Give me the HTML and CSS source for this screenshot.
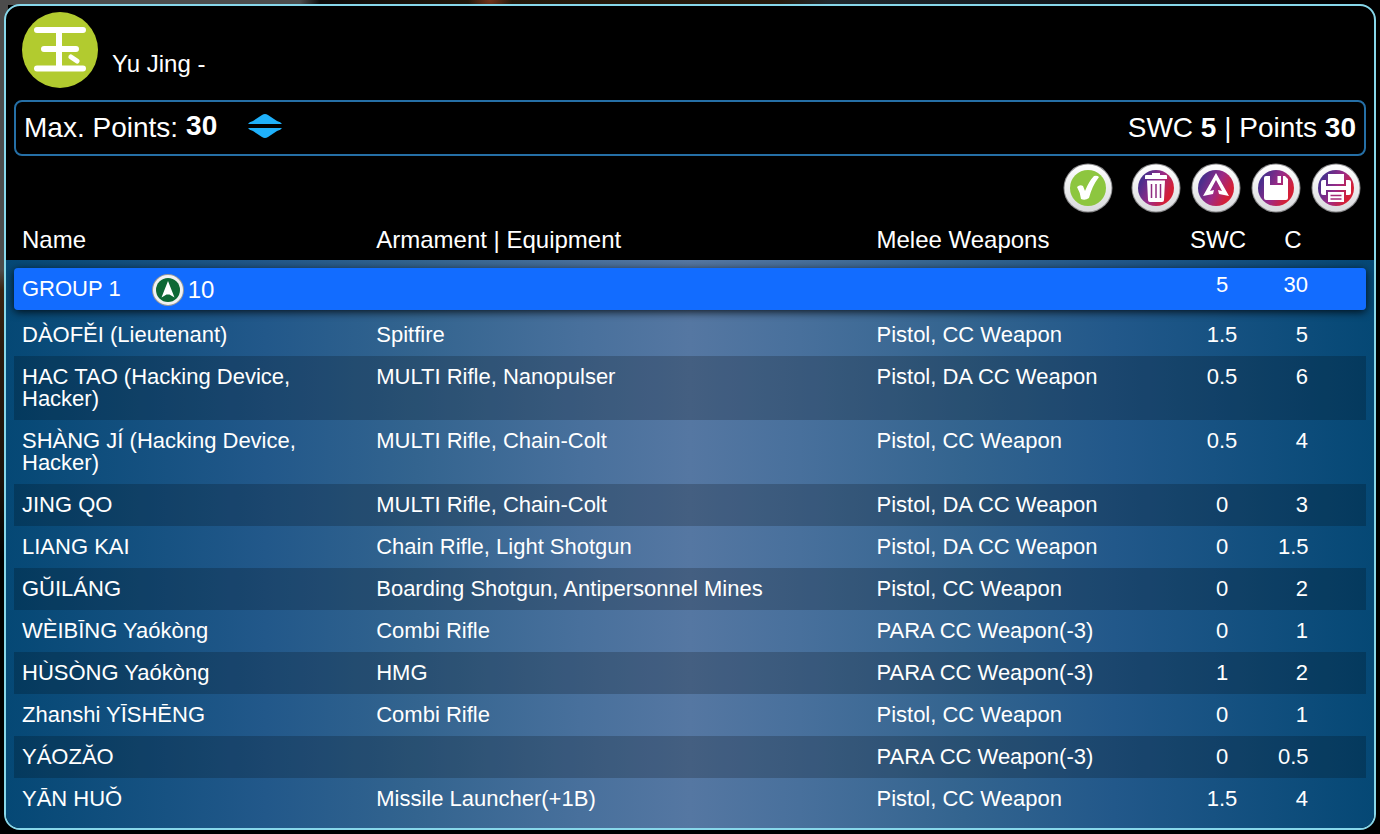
FILE: index.html
```html
<!DOCTYPE html>
<html lang="en">
<head>
    <meta charset="UTF-8">
    <meta name="viewport" content="width=device-width, initial-scale=1.0">
    <title>Army List - Yu Jing</title>
    <link rel="stylesheet" href="styles.css">
</head>
<body>

    <!-- Shared gradients for the round buttons -->
    <svg class="defs" width="0" height="0" aria-hidden="true">
        <defs>
            <linearGradient id="ring" x1="0" y1="0" x2="0" y2="1">
                <stop offset="0" stop-color="#ffffff"/>
                <stop offset="1" stop-color="#d9dadd"/>
            </linearGradient>
            <linearGradient id="disc" x1="0" y1="0.25" x2="1" y2="0.75">
                <stop offset="0.1" stop-color="#4a2f8c"/>
                <stop offset="0.5" stop-color="#9c2a86"/>
                <stop offset="0.85" stop-color="#d41f36"/>
            </linearGradient>
        </defs>
    </svg>

    <main class="panel">

        <!-- Faction -->
        <header class="faction">
            <svg class="faction-logo" viewBox="0 0 76 76" aria-hidden="true">
                <circle cx="38" cy="38" r="38" fill="#b2cb2f"/>
                <g stroke="#fff" stroke-width="6" stroke-linecap="round">
                    <path d="M15 18H61M22 37H54M15 56.500H61"/>
                    <path d="M37 18V56"/>
                    <path d="M49 45L55 49" stroke-width="5"/>
                </g>
            </svg>
            <h1 class="faction-name">Yu Jing -</h1>
        </header>

        <!-- Points -->
        <div class="points-bar">
            <div class="max-points">
                <label for="maxPoints">Max. Points:</label>
                <input id="maxPoints" class="max-input" type="text" value="30">
                <div class="stepper">
                    <button class="step-btn" type="button" aria-label="More points">
                        <svg viewBox="0 0 36 11"><path d="M1 11Q2 9 6 8L15 2Q18 0 21 2L30 8Q34 9 35 11Z"/></svg>
                    </button>
                    <button class="step-btn" type="button" aria-label="Fewer points">
                        <svg viewBox="0 0 36 11"><path d="M1 0Q2 2 6 3L15 9Q18 11 21 9L30 3Q34 2 35 0Z"/></svg>
                    </button>
                </div>
            </div>
            <div class="totals">SWC <b>5</b> | Points <b>30</b></div>
        </div>

        <!-- Toolbar -->
        <div class="toolbar">
            <button class="tool-btn valid" type="button" aria-label="List is valid">
                <svg viewBox="0 0 50 50">
                    <circle cx="25" cy="25" r="24.500" fill="#8b8b8d"/>
                    <circle cx="25" cy="25" r="23.500" fill="url(#ring)"/>
                    <circle cx="25" cy="25" r="18" fill="#8dc63f"/>
                    <path d="M14 24Q17 21 20 23L22 28Q26 18 31 13Q34 12 36 14Q29 23 26 35Q22 38 18 36Q17 29 14 24Z" fill="#fff"/>
                </svg>
            </button>
            <button class="tool-btn" type="button" aria-label="Delete">
                <svg viewBox="0 0 50 50">
                    <circle cx="25" cy="25" r="24.500" fill="#8b8b8d"/>
                    <circle cx="25" cy="25" r="23.500" fill="url(#ring)"/>
                    <circle cx="25" cy="25" r="18" fill="url(#disc)"/>
                    <path d="M21 12V10H29V12H35Q36 12 36 13V16H14V13Q14 12 15 12Z" fill="#fff"/>
                    <path d="M16 17.500H34L33 37Q33 39 31 39H19Q17 39 17 37Z" fill="#fff"/>
                    <path d="M20.500 21V35M25 21V35M29.500 21V35" stroke="#8f2b80" stroke-width="1.500"/>
                </svg>
            </button>
            <button class="tool-btn" type="button" aria-label="Army">
                <svg viewBox="0 0 50 50">
                    <circle cx="25" cy="25" r="24.500" fill="#8b8b8d"/>
                    <circle cx="25" cy="25" r="23.500" fill="url(#ring)"/>
                    <circle cx="25" cy="25" r="18" fill="url(#disc)"/>
                    <path d="M25 10L38 33L28 31L27 27L31 28L25 17L19 28L23 27L22 31L12 33Z" fill="#fff"/>
                </svg>
            </button>
            <button class="tool-btn" type="button" aria-label="Save">
                <svg viewBox="0 0 50 50">
                    <circle cx="25" cy="25" r="24.500" fill="#8b8b8d"/>
                    <circle cx="25" cy="25" r="23.500" fill="url(#ring)"/>
                    <circle cx="25" cy="25" r="18" fill="url(#disc)"/>
                    <path d="M15 13H19V22H32V13H34L37 16V35Q37 37 35 37H15Q13 37 13 35V15Q13 13 15 13Z" fill="#fff"/>
                    <path d="M26.500 13H30V20H26.500Z" fill="#fff"/>
                </svg>
            </button>
            <button class="tool-btn" type="button" aria-label="Print">
                <svg viewBox="0 0 50 50">
                    <circle cx="25" cy="25" r="24.500" fill="#8b8b8d"/>
                    <circle cx="25" cy="25" r="23.500" fill="url(#ring)"/>
                    <circle cx="25" cy="25" r="18" fill="url(#disc)"/>
                    <path d="M17 11H33V21H17Z" fill="#fff"/>
                    <path d="M12 17H15V23H35V17H38Q40 17 40 19V30Q40 32 38 32H35V27H15V32H12Q10 32 10 30V19Q10 17 12 17Z" fill="#fff"/>
                    <path d="M17 29H33V39H17Z" fill="#fff"/>
                    <path d="M19.500 32.500H30.500M19.500 36H30.500" stroke="#a62a76" stroke-width="1.500"/>
                </svg>
            </button>
        </div>

        <!-- Roster -->
        <div class="roster-wrap">
            <table class="roster">
                <colgroup>
                    <col class="col-name">
                    <col class="col-arms">
                    <col class="col-melee">
                    <col class="col-swc">
                    <col class="col-cost">
                </colgroup>
                <thead>
                    <tr>
                        <th>Name</th>
                        <th>Armament | Equipment</th>
                        <th>Melee Weapons</th>
                        <th class="swc">SWC</th>
                        <th class="cost">C</th>
                    </tr>
                </thead>
                <tbody class="group">
                    <tr>
                        <td colspan="3">
                            <div class="group-title">
                                <span>GROUP 1</span>
                                <span class="orders">
                                    <svg class="order-icon" viewBox="0 0 32 32" aria-hidden="true">
                                        <circle cx="16" cy="16" r="16" fill="#9a9a9a"/>
                                        <circle cx="16" cy="16" r="15" fill="#f2f2f2"/>
                                        <circle cx="16" cy="16" r="12" fill="#0d6835"/>
                                        <path d="M16 7L22.500 23.500L17.500 20.500H14.500L9.500 23.500Z" fill="#fff"/>
                                    </svg>
                                    10
                                </span>
                            </div>
                        </td>
                        <td class="swc">5</td>
                        <td class="cost">30</td>
                    </tr>
                </tbody>
                <tbody class="units">
                    <tr>
                        <td>DÀOFĚI (Lieutenant)</td>
                        <td>Spitfire</td>
                        <td>Pistol, CC Weapon</td>
                        <td class="swc">1.5</td>
                        <td class="cost">5</td>
                    </tr>
                    <tr>
                        <td>HAC TAO (Hacking Device, Hacker)</td>
                        <td>MULTI Rifle, Nanopulser</td>
                        <td>Pistol, DA CC Weapon</td>
                        <td class="swc">0.5</td>
                        <td class="cost">6</td>
                    </tr>
                    <tr>
                        <td>SHÀNG JÍ (Hacking Device, Hacker)</td>
                        <td>MULTI Rifle, Chain-Colt</td>
                        <td>Pistol, CC Weapon</td>
                        <td class="swc">0.5</td>
                        <td class="cost">4</td>
                    </tr>
                    <tr>
                        <td>JING QO</td>
                        <td>MULTI Rifle, Chain-Colt</td>
                        <td>Pistol, DA CC Weapon</td>
                        <td class="swc">0</td>
                        <td class="cost">3</td>
                    </tr>
                    <tr>
                        <td>LIANG KAI</td>
                        <td>Chain Rifle, Light Shotgun</td>
                        <td>Pistol, DA CC Weapon</td>
                        <td class="swc">0</td>
                        <td class="cost">1.5</td>
                    </tr>
                    <tr>
                        <td>GŬILÁNG</td>
                        <td>Boarding Shotgun, Antipersonnel Mines</td>
                        <td>Pistol, CC Weapon</td>
                        <td class="swc">0</td>
                        <td class="cost">2</td>
                    </tr>
                    <tr>
                        <td>WÈIBĪNG Yaókòng</td>
                        <td>Combi Rifle</td>
                        <td>PARA CC Weapon(-3)</td>
                        <td class="swc">0</td>
                        <td class="cost">1</td>
                    </tr>
                    <tr>
                        <td>HÙSÒNG Yaókòng</td>
                        <td>HMG</td>
                        <td>PARA CC Weapon(-3)</td>
                        <td class="swc">1</td>
                        <td class="cost">2</td>
                    </tr>
                    <tr>
                        <td>Zhanshi YĪSHĒNG</td>
                        <td>Combi Rifle</td>
                        <td>Pistol, CC Weapon</td>
                        <td class="swc">0</td>
                        <td class="cost">1</td>
                    </tr>
                    <tr>
                        <td>YÁOZĂO</td>
                        <td></td>
                        <td>PARA CC Weapon(-3)</td>
                        <td class="swc">0</td>
                        <td class="cost">0.5</td>
                    </tr>
                    <tr>
                        <td>YĀN HUǑ</td>
                        <td>Missile Launcher(+1B)</td>
                        <td>Pistol, CC Weapon</td>
                        <td class="swc">1.5</td>
                        <td class="cost">4</td>
                    </tr>
                </tbody>
            </table>
        </div>
    </main>

</body>
</html>
```
FILE: styles.css
```css
/* General Styles */
* {
    box-sizing: border-box;
}

html {
    min-height: 100%;
    background:
        radial-gradient(circle at 490px 0, #74331a 0, transparent 22px) 0 0 / 100% 30px no-repeat,
        linear-gradient(to right, #4c4c4c 0, #4c4c4c 300px, #0c0a09 320px, #231709 480px, #26190b 780px, #20282d 830px, #161b20 1000px, #000 1350px) 0 0 / 100% 5px no-repeat,
        linear-gradient(to bottom, #4c4c4c 0, #4c4c4c 270px, #3a2310 290px, #2a1a0e 350px, #1c120a 480px, #000 560px) 0 0 / 8px 100% no-repeat,
        #000;
}

body {
    margin: 0;
    padding: 4px;
    font-family: "Liberation Sans", Arial, sans-serif;
    font-size: 22px;
    line-height: 22px;
    color: #fff;
}

button {
    padding: 0;
    border: 0;
    background: none;
    cursor: pointer;
}

svg {
    display: block;
}

.defs {
    position: absolute;
}

/* Panel */
.panel {
    overflow: hidden;
    border: 2px solid #87d7ea;
    border-radius: 16px;
    background: #000;
}

/* Faction */
.faction {
    display: flex;
    align-items: center;
    gap: 14px;
    padding: 6px 16px 12px;
}

.faction-logo {
    width: 76px;
    height: 76px;
}

.faction-name {
    margin: 28px 0 0;
    font-size: 24px;
    font-weight: normal;
    line-height: 28px;
}

/* Points */
.points-bar {
    display: flex;
    align-items: center;
    justify-content: space-between;
    height: 56px;
    margin: 0 8px;
    padding: 0 8px;
    border: 2px solid #256fa6;
    border-radius: 8px;
    font-size: 28px;
    line-height: 32px;
}

.max-points {
    display: flex;
    align-items: center;
}

.max-input {
    width: 61px;
    margin-left: 8px;
    padding: 0 0 4px;
    border: 0;
    background: none;
    color: #fff;
    font: bold 28px/32px "Liberation Sans", Arial, sans-serif;
}

.stepper {
    display: flex;
    flex-direction: column;
    gap: 4px;
    padding-bottom: 4px;
}

.step-btn svg {
    width: 36px;
    height: 11px;
    fill: #1fb1fb;
}

/* Toolbar */
.toolbar {
    display: flex;
    justify-content: flex-end;
    gap: 10px;
    padding: 7px 13px;
}

.tool-btn svg {
    width: 50px;
    height: 50px;
}

.valid {
    margin-right: 8px;
}

/* Roster */
.roster-wrap {
    padding: 0 8px 8px;
    background: linear-gradient(to right, #054875 0, #22588a 19%, #33648f 30%, #48709c 42%, #5577a2 50%, #48709c 58%, #33648f 70%, #22588a 81%, #054875 100%);
}

.roster {
    width: 100%;
    table-layout: fixed;
    border-spacing: 0;
}

.col-name {
    width: 26.2%;
}

.col-arms {
    width: 37%;
}

.col-swc {
    width: 100px;
}

.col-cost {
    width: 94px;
}

.roster th {
    padding: 6px 8px;
    background: #000;
    font-size: 24px;
    font-weight: normal;
    line-height: 28px;
    text-align: left;
}

/* Carries the black header out to the panel edges */
.roster th:first-child {
    box-shadow: -8px 0 #000;
}

.roster th:last-child {
    box-shadow: 8px 0 #000;
}

.roster td {
    padding: 10px 8px;
    vertical-align: top;
}

.roster .swc {
    padding-left: 0;
    padding-right: 0;
    text-align: center;
}

.roster th.swc {
    padding-right: 8px;
}

.roster .cost {
    padding-left: 6px;
    padding-right: 58px;
    text-align: right;
}

.roster th.cost {
    text-align: center;
}

.roster tbody::before {
    content: "";
    display: block;
    height: 4px;
}

.roster .group::before {
    height: 8px;
}

.group tr {
    box-shadow: 0 2px 8px rgba(0, 0, 0, 0.8);
    border-radius: 4px;
}

.roster .group td {
    padding-top: 6px;
    padding-bottom: 4px;
    background: #126cff;
}

.roster .group td:first-child {
    padding-top: 4px;
    border-radius: 4px 0 0 4px;
}

.group td:last-child {
    border-radius: 0 4px 4px 0;
}

.group-title {
    display: flex;
    align-items: center;
    gap: 31px;
    line-height: 28px;
}

.orders {
    display: flex;
    align-items: center;
    gap: 4px;
    padding-top: 2px;
    font-size: 24px;
}

.order-icon {
    width: 32px;
    height: 32px;
}

.units tr:nth-child(even) td {
    background: rgba(0, 0, 0, 0.2);
}
```
